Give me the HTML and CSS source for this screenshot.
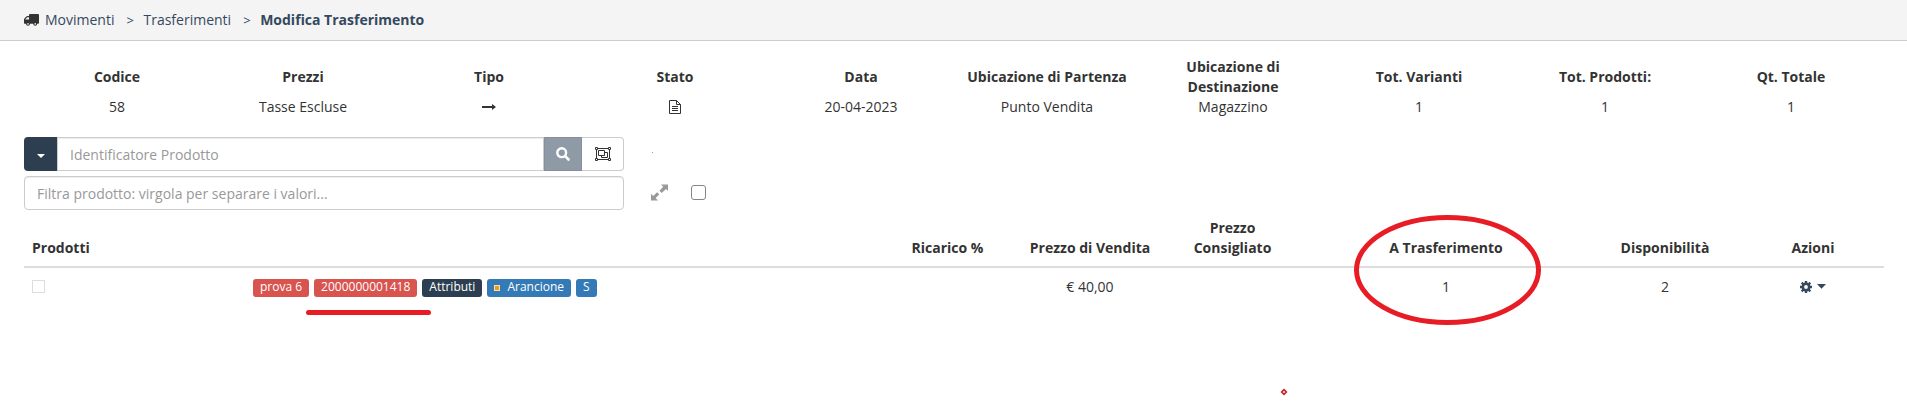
FILE: index.html
```html
<!DOCTYPE html>
<html lang="it">
<head>
<meta charset="utf-8">
<title>Modifica Trasferimento</title>
<link rel="stylesheet" href="styles.css">
</head>
<body>
<nav class="breadcrumb">
  <svg class="truck" width="15" height="14" viewBox="0 0 15 14"><path fill="#333" d="M6 1h8q1 0 1 1v8q0 .8-1 .8h-.8a2 2 0 0 1-4 0H6a2 2 0 0 1-4 0H.6Q0 10.800 0 10V6.500q0-.5.4-.9l2-2Q2.800 3 3.500 3H5V2q0-1 1-1z"/><path fill="#f4f4f4" d="M1.300 6.500V6.200L3.300 4.200H5v2.300z"/><circle cx="4" cy="10.900" r=".8" fill="#f4f4f4"/><circle cx="11.200" cy="10.900" r=".8" fill="#f4f4f4"/></svg>
  <a>Movimenti</a><span class="sep">&gt;</span><a>Trasferimenti</a><span class="sep">&gt;</span><b>Modifica Trasferimento</b>
</nav>
<main class="content">
  <section class="summary">
    <div class="info"><strong>Codice</strong><span>58</span></div>
    <div class="info"><strong>Prezzi</strong><span>Tasse Escluse</span></div>
    <div class="info"><strong>Tipo</strong><span class="glyph"><svg width="14" height="14" viewBox="0 0 14 14"><path fill="#333" d="M0 6h10V4l4 3-4 3V8H0z"/></svg></span></div>
    <div class="info"><strong>Stato</strong><span class="glyph"><svg width="12" height="14" viewBox="0 0 12 14"><path fill="none" stroke="#333" d="M.5.500H7.500L11.500 4.500V13.500H.5zM7.500.500V4.500H11.500M3 6.500H9M3 8.500H9M3 10.500H9"/></svg></span></div>
    <div class="info"><strong>Data</strong><span>20-04-2023</span></div>
    <div class="info"><strong>Ubicazione di Partenza</strong><span>Punto Vendita</span></div>
    <div class="info"><strong>Ubicazione di<br>Destinazione</strong><span>Magazzino</span></div>
    <div class="info"><strong>Tot. Varianti</strong><span>1</span></div>
    <div class="info"><strong>Tot. Prodotti:</strong><span>1</span></div>
    <div class="info"><strong>Qt. Totale</strong><span>1</span></div>
  </section>
  <section class="filters">
    <div class="filter-row">
      <div class="input-group">
        <button class="btn-menu" aria-label="Menu"><svg width="8" height="4" viewBox="0 0 8 4"><path fill="#fff" d="M0 0h8L4 4z"/></svg></button>
        <input class="field" type="text" placeholder="Identificatore Prodotto">
        <button class="btn-search" aria-label="Cerca"><svg width="14" height="14" viewBox="0 0 14 14"><circle cx="5.700" cy="5.700" r="4.400" fill="none" stroke="#fff" stroke-width="2.400"/><path stroke="#fff" stroke-width="2.600" stroke-linecap="round" d="M9.200 9.200l3.300 3.300"/></svg></button>
        <button class="btn-group" aria-label="Raggruppa"><svg width="16" height="14" viewBox="0 0 16 14"><path fill="none" stroke="#333" d="M3 1.500H13M3 12.500H13M1.500 3V11M14.500 3V11M3.500 3.500H9.500V8.500H3.500zM9.500 5.500H12.500V10.500H6.500V8.500"/><path fill="#fff" stroke="#333" d="M.5.500h2v2h-2zM13.500.500h2v2h-2zM.5 11.500h2v2h-2zM13.500 11.500h2v2h-2z"/></svg></button>
      </div>
      <i class="dot"></i>
    </div>
    <div class="filter-row">
      <input class="field field-wide" type="text" placeholder="Filtra prodotto: virgola per separare i valori...">
      <svg class="expand" width="17" height="17" viewBox="0 0 17 17"><path fill="#999" d="M10 .5h7v6.500l-2-2-4.300 3.900-2.200-2.200L12.200 2.700zM0 9.800l2.200 2.100 3.900-3.600 2.200 2.200-3.700 3.600L7 16.500H0z"/></svg>
      <span class="check"></span>
    </div>
  </section>
  <section class="products">
    <div class="row head">
      <div class="left">Prodotti</div><div>Ricarico %</div><div>Prezzo di Vendita</div><div>Prezzo<br>Consigliato</div><div>A Trasferimento</div><div>Disponibilità</div><div>Azioni</div>
    </div>
    <div class="row item">
      <div class="product"><span class="row-check"></span>
        <div class="labels"><span class="label red">prova 6</span><span class="label red">2000000001418</span><span class="label navy">Attributi</span><span class="label blue"><i class="swatch"></i>Arancione</span><span class="label blue">S</span></div>
      </div>
      <div></div><div>€ 40,00</div><div></div><div>1</div><div>2</div>
      <div class="actions"><svg width="12" height="12" viewBox="0 0 12 12"><circle cx="6" cy="6" r="3.200" fill="none" stroke="#34495e" stroke-width="2.600"/><path stroke="#34495e" stroke-width="2.400" d="M6 0v2.500M6 9.500V12M0 6h2.500M9.500 6H12M1.700 1.700l1.800 1.800M8.500 8.500l1.800 1.800M1.700 10.300l1.800-1.800M8.500 3.500l1.800-1.800"/></svg><svg width="9" height="5" viewBox="0 0 9 5"><path fill="#34495e" d="M0 0h9L4.500 4.800z"/></svg></div>
    </div>
  </section>
</main>
<svg class="annotations" width="1907" height="401" viewBox="0 0 1907 401" fill="none" stroke="#e81c24">
  <path stroke-width="5" stroke-linecap="round" d="M308.500 312.500H428.500"/>
  <ellipse cx="1447.500" cy="270" rx="91" ry="52.500" stroke-width="5"/>
  <path stroke="#c1282d" stroke-width="1.700" d="M1284 389.700l2.300 2.300-2.300 2.300-2.300-2.300z"/>
</svg>
</body>
</html>
```
FILE: styles.css
```css
* { box-sizing: border-box; }
body {
  margin: 0;
  height: 401px;
  position: relative;
  overflow: hidden;
  background: #fff;
  color: #333;
  font: 14px/20px "Open Sans", sans-serif;
}
svg { display: block; flex: none; }
.breadcrumb {
  display: flex;
  align-items: center;
  height: 41px;
  padding: 0 24px;
  background: #f4f4f4;
  border-bottom: 1px solid #ccc;
  color: #34495e;
}
.truck { margin-right: 6px; }
.sep { width: 29px; padding-left: 12px; font-size: 13px; }
.breadcrumb b { font-weight: 700; }
.content { padding: 16px 23px 0 24px; }
.summary { display: grid; grid-template-columns: repeat(10, 1fr); }
.info { display: flex; flex-direction: column; text-align: center; }
.info strong {
  display: flex;
  align-items: center;
  justify-content: center;
  height: 40px;
}
.info span { height: 20px; }
.info .glyph { display: flex; align-items: center; justify-content: center; }
.filters { display: grid; gap: 5px; margin-top: 20px; }
.filter-row { display: flex; align-items: center; height: 34px; }
.input-group { display: flex; width: 600px; height: 34px; }
.field {
  flex: 1;
  min-width: 0;
  height: 34px;
  padding: 0 12px;
  border: 1px solid #ccc;
  background: #fff;
  box-shadow: inset 0 1px 1px rgba(0, 0, 0, .075);
  color: #555;
  font: inherit;
}
.field::placeholder { color: #999; opacity: 1; }
.field-wide { flex: none; width: 600px; border-radius: 4px; }
button {
  display: flex;
  align-items: center;
  justify-content: center;
  padding: 0;
  border: 0;
}
.btn-menu { width: 33px; padding-top: 4px; background: #2c3e50; border-radius: 4px 0 0 4px; }
.btn-search { width: 38px; background: #8e9ba6; border: 1px solid #84919c; }
.btn-group { width: 42px; background: #fff; border: 1px solid #ccc; border-left: 0; border-radius: 0 4px 4px 0; }
.dot { width: 1px; height: 1px; margin: -3px 0 0 28px; background: #999; }
.expand { margin: -2px 0 0 27px; }
.check {
  width: 15px;
  height: 15px;
  margin: -2px 0 0 23px;
  border: 1px solid #858585;
  border-radius: 3px;
}
.products { margin-top: 8px; }
.row {
  display: grid;
  grid-template-columns: 852px 143px 142px 143px 284px 154px 142px;
  text-align: center;
}
.head { align-items: end; height: 50px; padding-bottom: 8px; border-bottom: 2px solid #ddd; font-weight: 700; }
.left { padding-left: 8px; text-align: left; }
.item { align-items: center; height: 37px; }
.product { display: flex; align-items: center; padding-left: 8px; }
.row-check { width: 13px; height: 13px; border: 1px solid #ddd; }
.labels { display: flex; gap: 5px; margin: 2px 0 0 208px; }
.label {
  display: flex;
  align-items: center;
  height: 18px;
  padding: 0 7px 2px;
  border-radius: 3px;
  color: #fff;
  font-size: 12px;
  line-height: 16px;
}
.red { background: #d9534f; }
.navy { background: #2c3e50; }
.blue { background: #337ab7; }
.swatch { width: 6px; height: 6px; margin: 2px 7px 0 0; background: #f39c12; border: 1px solid #f5dfb8; }
.actions { display: flex; align-items: center; justify-content: center; gap: 5px; }
.annotations { position: absolute; inset: 0; pointer-events: none; }
```
